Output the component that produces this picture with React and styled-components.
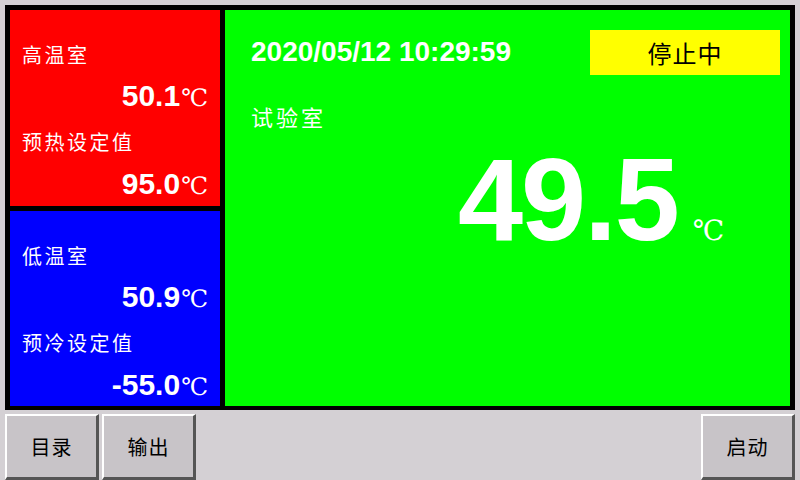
import styled, { createGlobalStyle } from "styled-components";

const GlobalStyle = createGlobalStyle`
  html, body {
    margin: 0;
    padding: 0;
    background: #d4d0d4;
  }
`;

const cjk = `"Noto Sans CJK SC", "Noto Sans", sans-serif`;
const latin = `"Liberation Sans", Arial, "Noto Sans CJK SC", sans-serif`;
const degree = `"DejaVu Serif", "Noto Sans CJK SC", serif`;

const chambers = [
  {
    color: "#ff0000",
    name: "高温室",
    value: "50.1",
    setLabel: "预热设定值",
    setValue: "95.0",
  },
  {
    color: "#0000ff",
    name: "低温室",
    value: "50.9",
    setLabel: "预冷设定值",
    setValue: "-55.0",
  },
];

function App() {
  return (
    <>
      <GlobalStyle />
      <Screen>
        <Frame>
          <SideColumn>
            {chambers.map((c) => (
              <ChamberPanel key={c.name} $bg={c.color}>
                <PanelLabel>{c.name}</PanelLabel>
                <PanelValue $gap={16}>
                  {c.value}
                  <Unit>℃</Unit>
                </PanelValue>
                <PanelLabel $gap={19}>{c.setLabel}</PanelLabel>
                <PanelValue $gap={17}>
                  {c.setValue}
                  <Unit>℃</Unit>
                </PanelValue>
              </ChamberPanel>
            ))}
          </SideColumn>
          <MainPanel>
            <HeaderRow>
              <Clock>2020/05/12 10:29:59</Clock>
              <StatusBadge>停止中</StatusBadge>
            </HeaderRow>
            <MainLabel>试验室</MainLabel>
            <Reading>
              49.5
              <BigUnit>℃</BigUnit>
            </Reading>
          </MainPanel>
        </Frame>
        <ButtonBar>
          <SoftKey>目录</SoftKey>
          <SoftKey>输出</SoftKey>
          <Spacer />
          <SoftKey>启动</SoftKey>
        </ButtonBar>
      </Screen>
    </>
  );
}

const Screen = styled.div`
  width: 800px;
  height: 480px;
  overflow: hidden;
  display: flex;
  flex-direction: column;
  padding-top: 5px;
  box-sizing: border-box;
`;

const Frame = styled.div`
  margin: 0 5px;
  height: 408px;
  box-sizing: border-box;
  padding: 5px 5px 4px 5px;
  background: #000;
  display: flex;
  gap: 5px;
`;

const SideColumn = styled.div`
  width: 210px;
  display: flex;
  flex-direction: column;
  gap: 5px;
`;

const ChamberPanel = styled.div`
  flex: 1;
  background: ${(p) => p.$bg};
  display: flex;
  flex-direction: column;
  padding: 35px 13px 0 12px;
`;

const PanelLabel = styled.div`
  margin-top: ${(p) => p.$gap || 0}px;
  font-family: ${cjk};
  font-size: 20px;
  line-height: 20px;
  letter-spacing: 2.5px;
  color: #fff;
`;

const PanelValue = styled.div`
  margin-top: ${(p) => p.$gap || 0}px;
  align-self: flex-end;
  font-family: ${latin};
  font-weight: bold;
  font-size: 30px;
  line-height: 30px;
  color: #fff;
  display: flex;
  align-items: baseline;
`;

const Unit = styled.span`
  font-family: ${degree};
  font-weight: normal;
  font-size: 24px;
  margin-left: 1px;
  letter-spacing: -1px;
`;

const MainPanel = styled.div`
  flex: 1;
  background: #00ff00;
  display: flex;
  flex-direction: column;
  padding: 20px 10px 0 26px;
`;

const HeaderRow = styled.div`
  display: flex;
  justify-content: space-between;
  align-items: flex-start;
`;

const Clock = styled.div`
  margin-top: 8px;
  font-family: ${latin};
  font-weight: bold;
  font-size: 28px;
  line-height: 28px;
  color: #fff;
`;

const StatusBadge = styled.div`
  width: 190px;
  height: 45px;
  background: #ffff00;
  color: #000;
  display: flex;
  align-items: center;
  justify-content: center;
  font-family: ${cjk};
  font-size: 24px;
  letter-spacing: 1px;
`;

const MainLabel = styled.div`
  margin-top: 30px;
  font-family: ${cjk};
  font-size: 22px;
  line-height: 22px;
  letter-spacing: 3px;
  color: #fff;
`;

const Reading = styled.div`
  margin-top: 14px;
  padding-left: 207px;
  display: flex;
  align-items: baseline;
  font-family: ${latin};
  font-weight: bold;
  font-size: 117px;
  line-height: 117px;
  letter-spacing: -2px;
  color: #fff;
`;

const BigUnit = styled.span`
  margin-left: 15px;
  font-family: ${degree};
  font-weight: normal;
  font-size: 28px;
  letter-spacing: 0;
`;

const ButtonBar = styled.div`
  flex: 1;
  display: flex;
  gap: 3px;
  padding: 4px 5px 0 5px;
`;

const SoftKey = styled.div`
  width: 94px;
  height: 66px;
  box-sizing: border-box;
  background: #c8c4c8;
  border-top: 2px solid #fff;
  border-left: 2px solid #fff;
  border-right: 3px solid #555;
  border-bottom: 3px solid #555;
  display: flex;
  align-items: center;
  justify-content: center;
  padding-bottom: 1px;
  font-family: ${cjk};
  font-size: 20px;
  letter-spacing: 1px;
  color: #000;
`;

const Spacer = styled.div`
  flex: 1;
`;

export default App;
